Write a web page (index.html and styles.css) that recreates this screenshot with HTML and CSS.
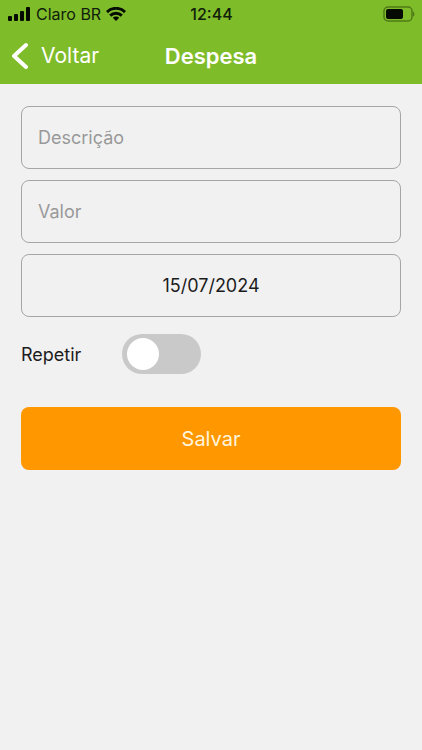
FILE: index.html
```html
<!DOCTYPE html>
<html lang="pt-BR">
<head>
  <meta charset="utf-8">
  <meta name="viewport" content="width=device-width, initial-scale=1">
  <title>Despesa</title>
  <link rel="stylesheet" href="styles.css">
</head>
<body>
  <header class="header">
    <div class="status">
      <div class="carrier">
        <svg class="signal" width="23" height="14" viewBox="0 0 23 14" aria-hidden="true">
          <rect x="0" y="9" width="4" height="5" rx="1"/>
          <rect x="6" y="7" width="4" height="7" rx="1"/>
          <rect x="12" y="4" width="4" height="10" rx="1"/>
          <rect x="18" y="0" width="4" height="14" rx="1"/>
        </svg>
        <span>Claro BR</span>
        <svg class="wifi" width="20" height="14" viewBox="0 0 20 14" aria-hidden="true">
          <path class="wave" d="M1 5.1C6 .1 14 .1 19 5.1M4.2 8.6C7.6 5.4 12.4 5.4 15.8 8.6"/>
          <path d="M10 13.9 6.800 10.700C8.500 9 11.500 9 13.200 10.700Z"/>
        </svg>
      </div>
      <time class="clock">12:44</time>
      <svg class="battery" width="32" height="16" viewBox="0 0 32 16" aria-hidden="true">
        <rect class="shell" x="1" y="1" width="28" height="14" rx="4"/>
        <rect x="3" y="3" width="17" height="10" rx="2"/>
        <path class="cap" d="M30 5.500Q31.500 6 31.500 8T30 10.500Z"/>
      </svg>
    </div>
    <nav class="nav">
      <a class="back" href="#">
        <svg width="18" height="28" viewBox="0 0 18 28" aria-hidden="true">
          <path d="M14 3 2 14 14 25"/>
        </svg>
        <span>Voltar</span>
      </a>
      <h1 class="title">Despesa</h1>
    </nav>
  </header>
  <main>
    <form class="form">
      <input class="field" type="text" placeholder="Descrição" aria-label="Descrição">
      <input class="field" type="text" inputmode="decimal" placeholder="Valor" aria-label="Valor">
      <input class="field date" type="text" value="15/07/2024" aria-label="Data">
      <div class="repeat">
        <label for="repeat">Repetir</label>
        <input class="switch" id="repeat" type="checkbox" role="switch">
      </div>
      <button class="save" type="submit">Salvar</button>
    </form>
  </main>
</body>
</html>
```
FILE: styles.css
```css
* {
  box-sizing: border-box;
}

body {
  margin: 0;
  min-height: 100vh;
  background: #f1f1f1;
  color: #1c1c1c;
  font-family: Inter, "Liberation Sans", sans-serif;
  font-size: 18px;
}

.header {
  background: #7fbc2a;
}

.status {
  display: grid;
  grid-template-columns: 1fr auto 1fr;
  align-items: center;
  height: 27px;
  padding: 0 7px 0 8px;
  color: #10200a;
  font-size: 16px;
}

.carrier {
  display: flex;
  align-items: center;
  gap: 5px;
  white-space: nowrap;
}

.signal,
.wifi,
.battery {
  flex: none;
  fill: #050a02;
}

.wave {
  fill: none;
  stroke: #050a02;
  stroke-width: 3;
}

.clock {
  font-weight: 500;
}

.battery {
  justify-self: end;
}

.battery .shell {
  fill: none;
  stroke: #4d7a16;
  stroke-width: 1.5;
}

.battery .cap {
  fill: #4d7a16;
}

.nav {
  display: grid;
  grid-template-columns: 1fr auto 1fr;
  align-items: center;
  height: 57px;
  padding: 0 12px;
  color: #fff;
}

.back {
  display: flex;
  align-items: center;
  gap: 11px;
  color: inherit;
  font-size: 21px;
  text-decoration: none;
}

.back path {
  fill: none;
  stroke: #fff;
  stroke-width: 4;
  stroke-linecap: round;
  stroke-linejoin: round;
}

.title {
  margin: 0;
  font-size: 22px;
  font-weight: 600;
}

.form {
  display: flex;
  flex-direction: column;
  gap: 11px;
  padding: 22px 21px;
}

.field {
  width: 100%;
  height: 63px;
  padding: 0 16px;
  border: 1px solid #a6a6a6;
  border-radius: 8px;
  background: transparent;
  color: inherit;
  font: inherit;
}

.field::placeholder {
  color: #999;
  opacity: 1;
}

.date {
  text-align: center;
}

.repeat {
  display: flex;
  align-items: center;
  gap: 41px;
  margin: 6px 0 22px;
}

.switch {
  appearance: none;
  display: flex;
  align-items: center;
  width: 79px;
  height: 40px;
  margin: 0;
  padding: 0 5px;
  border-radius: 20px;
  background: #c9c9c9;
}

.switch::before {
  content: "";
  width: 32px;
  height: 32px;
  border-radius: 50%;
  background: #fff;
}

.switch:checked {
  justify-content: flex-end;
  background: #7fbc2a;
}

.save {
  height: 63px;
  border: 0;
  border-radius: 8px;
  background: #ff9800;
  color: #fff4dc;
  font: inherit;
  font-size: 20px;
}
```
